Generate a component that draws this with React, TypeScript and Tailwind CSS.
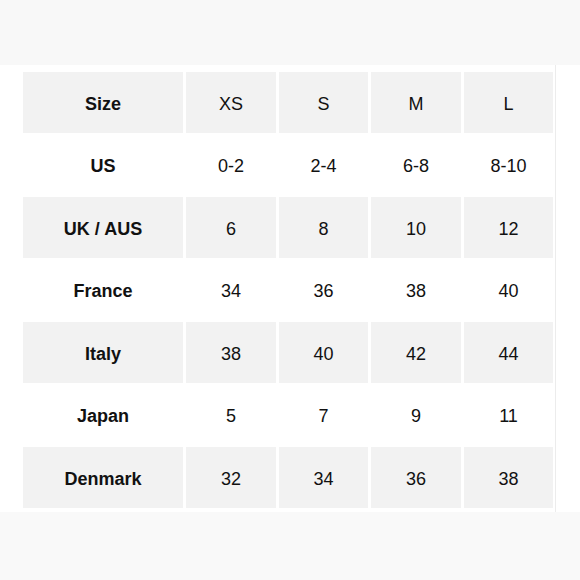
import React from "react";

const rows = [
  { label: "Size", values: ["XS", "S", "M", "L"] },
  { label: "US", values: ["0-2", "2-4", "6-8", "8-10"] },
  { label: "UK / AUS", values: ["6", "8", "10", "12"] },
  { label: "France", values: ["34", "36", "38", "40"] },
  { label: "Italy", values: ["38", "40", "42", "44"] },
  { label: "Japan", values: ["5", "7", "9", "11"] },
  { label: "Denmark", values: ["32", "34", "36", "38"] },
];

const App: React.FC = () => {
  return (
    <div
      className="w-[580px] h-[580px] bg-white flex flex-col text-[#111]"
      style={{ fontFamily: '"Liberation Sans", Arial, sans-serif' }}
    >
      <div className="h-[65px] bg-[#f8f8f8]"></div>

      {/* Size chart */}
      <div className="h-[447px] w-[556px] border-r border-[#ececec] pl-[23px] pt-[7px]">
        <div className="grid grid-cols-[160px_90px_89px_90px_89px] gap-x-[3px] gap-y-[1.5px]">
          {rows.map((row, index) => {
            const cell = index % 2 === 0 ? "bg-[#f2f2f2]" : "";
            return (
              <React.Fragment key={index}>
                <div className={`h-[61px] pt-[3px] flex items-center justify-center text-[18px] font-bold ${cell}`}>
                  {row.label}
                </div>
                {row.values.map((value, valueIndex) => (
                  <div
                    key={valueIndex}
                    className={`h-[61px] pt-[3px] flex items-center justify-center text-[18px] ${cell}`}
                  >
                    {value}
                  </div>
                ))}
              </React.Fragment>
            );
          })}
        </div>
      </div>

      <div className="flex-1 bg-[#f9f9f9]"></div>
    </div>
  );
};

export default App;
